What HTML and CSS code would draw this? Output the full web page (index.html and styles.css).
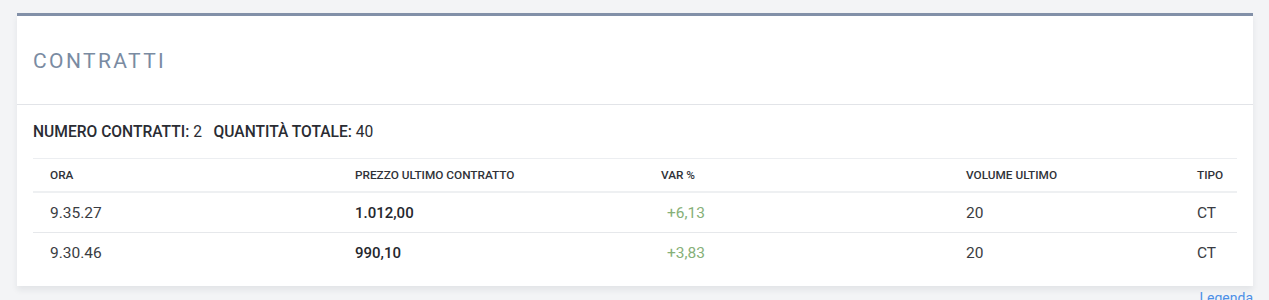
FILE: index.html
```html
<!DOCTYPE html>
<html lang="it">
<head>
<meta charset="utf-8">
<link rel="stylesheet" href="styles.css">
</head>
<body>
<div class="page">
  <section class="card">
    <header class="card-head">
      <h2 class="title">CONTRATTI</h2>
    </header>
    <div class="card-body">
      <p class="summary"><b>NUMERO CONTRATTI:</b> 2&nbsp;&nbsp; <b>QUANTITÀ TOTALE:</b> 40</p>
      <div class="table">
        <div class="row head">
          <div class="c">ORA</div>
          <div class="c">PREZZO ULTIMO CONTRATTO</div>
          <div class="c">VAR %</div>
          <div class="c">VOLUME ULTIMO</div>
          <div class="c">TIPO</div>
        </div>
        <div class="row">
          <div class="c">9.35.27</div>
          <div class="c price">1.012,00</div>
          <div class="c var">+6,13</div>
          <div class="c">20</div>
          <div class="c">CT</div>
        </div>
        <div class="row last">
          <div class="c">9.30.46</div>
          <div class="c price">990,10</div>
          <div class="c var">+3,83</div>
          <div class="c">20</div>
          <div class="c">CT</div>
        </div>
      </div>
    </div>
  </section>
  <div class="legend"><a href="#">Legenda</a></div>
</div>
</body>
</html>
```

FILE: styles.css
```css
html, body {
  margin: 0;
  padding: 0;
  background: #f3f4f6;
}
body {
  font-family: Roboto, "Liberation Sans", sans-serif;
  color: #2a2c33;
}
.page {
  padding: 13px 16px 0 17px;
}
.card {
  background: #fff;
  border-top: 3px solid #8290a8;
  box-shadow: 0 4px 6px rgba(40, 50, 70, 0.08);
}
.card-head {
  height: 88px;
  display: flex;
  align-items: center;
  padding-left: 16px;
  border-bottom: 1px solid #e2e4e8;
}
.title {
  margin: 0;
  font-size: 21px;
  font-weight: 400;
  letter-spacing: 2.4px;
  color: #7a8ba2;
  padding-top: 2px;
}
.card-body {
  padding: 0 16px 14px 16px;
}
.summary {
  margin: 0;
  height: 53px;
  display: flex;
  align-items: center;
  font-size: 15.6px;
  color: #2a2c33;
  white-space: pre;
  border-bottom: 1px solid #eceef1;
}
.summary b {
  font-weight: 500;
}
.table {
  display: flex;
  flex-direction: column;
}
.row {
  display: grid;
  grid-template-columns: 305px 306px 305px 231px 57px;
  align-items: center;
  height: 39px;
  border-bottom: 1px solid #e6e8eb;
  font-size: 15.5px;
  color: #3a3c42;
}
.row.head {
  height: 32px;
  font-size: 11.8px;
  font-weight: 500;
  color: #2f3238;
  border-bottom: 2px solid #eef0f2;
}
.row.last {
  border-bottom: none;
}
.c {
  padding-left: 17px;
}
.price {
  font-size: 15px;
  font-weight: 500;
  color: #25272d;
}
.var {
  padding-left: 23px;
  color: #86b078;
}
.legend {
  display: flex;
  justify-content: flex-end;
  padding-top: 4px;
  font-size: 14px;
}
.legend a {
  color: #4d8fe6;
  text-decoration: none;
}
```
